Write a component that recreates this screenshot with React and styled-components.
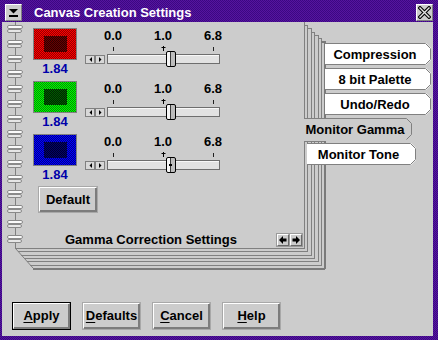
import React from "react";
import styled, { createGlobalStyle } from "styled-components";

const GlobalStyle = createGlobalStyle`
  html, body {
    margin: 0;
    padding: 0;
    background: #fff;
  }
  body {
    font-family: "Liberation Sans", Arial, sans-serif;
  }
`;

const checker = (a, b) =>
  `repeating-conic-gradient(${a} 0 25%, ${b} 0 50%) 0 0 / 2px 2px`;

const Window = styled.div`
  width: 438px;
  height: 340px;
  box-sizing: border-box;
  background: ${checker("#56149f", "#3b0882")};
  display: flex;
  flex-direction: column;
  font: bold 13px/13px "Liberation Sans", Arial, sans-serif;
  color: #000;
`;

const TitleBar = styled.div`
  height: 22px;
  box-sizing: border-box;
  padding: 4px 5px 0 5px;
  display: flex;
  align-items: flex-start;
`;

const FrameButton = styled.div`
  width: ${({ $w }) => $w}px;
  height: ${({ $w }) => $w}px;
  box-sizing: border-box;
  background: #cccccc;
  border: 1px solid;
  border-color: #fff #808080 #808080 #fff;
  display: flex;
  align-items: center;
  justify-content: center;
  margin-left: ${({ $push }) => ($push ? "auto" : "0")};
`;

const Title = styled.div`
  margin: 2px 0 0 12px;
  color: #fff;
`;

const Client = styled.div`
  flex: 1;
  margin: 0 5px 4px 2px;
  background: #cccccc;
  position: relative;
  display: flex;
  flex-direction: column;
`;

const StackArt = styled.svg`
  position: absolute;
  top: 0;
  left: 0;
  z-index: 0;
`;

const Notebook = styled.div`
  position: relative;
  z-index: 1;
  height: 270px;
  display: flex;
  align-items: flex-start;
`;

const Binding = styled.div`
  width: 21px;
  box-sizing: border-box;
  padding: 3px 0 0 5px;
  display: flex;
  flex-direction: column;
  gap: 7px;
`;

const Page = styled.div`
  width: 281px;
  box-sizing: border-box;
  padding: 6px 0 0 10px;
  display: flex;
  flex-direction: column;
`;

const ColorRow = styled.div`
  display: flex;
  margin-bottom: 6px;
`;

const SwatchCol = styled.div`
  width: 44px;
  display: flex;
  flex-direction: column;
  align-items: center;
`;

const Swatch = styled.div`
  width: 44px;
  height: 32px;
  box-sizing: border-box;
  border: 1px solid #808080;
  background: ${({ $a, $b }) => checker($a, $b)};
  display: flex;
  align-items: center;
  justify-content: center;
`;

const SwatchCore = styled.div`
  width: 23px;
  height: 16px;
  background: ${({ $a, $b }) => checker($a, $b)};
`;

const Value = styled.div`
  margin-top: 2px;
  color: #0000aa;
`;

const SliderCol = styled.div`
  margin-left: 8px;
  display: flex;
  flex-direction: column;
`;

const ScaleRow = styled.div`
  display: flex;
  padding-left: 3px;
  margin-top: ${({ $top }) => $top || 0}px;
  height: ${({ $h }) => ($h ? `${$h}px` : "auto")};
  align-items: flex-end;
`;

const ScaleCell = styled.div`
  width: 50px;
  display: flex;
  justify-content: center;
  text-align: center;
`;

const Tick = styled.div`
  width: 1px;
  height: 4px;
  background: #202020;
`;

const SliderRow = styled.div`
  height: 16px;
  display: flex;
  align-items: center;
`;

const Spin = styled.div`
  display: flex;
`;

const SpinButton = styled.div`
  width: 10px;
  height: 9px;
  box-sizing: border-box;
  background: #d8d8d8;
  border: 1px solid;
  border-color: #fff #404040 #404040 #fff;
  outline: 1px solid #808080;
  outline-offset: -1px;
  display: flex;
  align-items: center;
  justify-content: center;
`;

const Track = styled.div`
  position: relative;
  margin-left: 2px;
  width: 113px;
  height: 10px;
  box-sizing: border-box;
  border: 1px solid #6e6e6e;
  background: #e2e2e2;
  box-shadow: inset 0 1px 0 #f8f8f8;
`;

const Thumb = styled.div`
  position: absolute;
  top: -4px;
  left: 58px;
  width: 10px;
  height: 16px;
  box-sizing: border-box;
  border: 1px solid #000;
  border-radius: 2px;
  background: linear-gradient(
    to right,
    #f6f6f6 0 3px,
    #3a3a3a 3px 4px,
    #bdbdbd 4px
  );

  &::after {
    content: "";
    display: ${({ $focus }) => ($focus ? "block" : "none")};
    position: absolute;
    left: 2px;
    top: 6px;
    width: 3px;
    height: 2px;
    background: #000;
  }
`;

const PushButton = styled.button`
  width: ${({ $w }) => $w || 57}px;
  height: ${({ $h }) => $h || 26}px;
  box-sizing: border-box;
  padding: 0 0 1px;
  margin: 0 0 0 ${({ $ml }) => $ml || 0}px;
  background: #cccccc;
  border: 1px solid;
  border-color: #fff #7c7c7c #7c7c7c #fff;
  box-shadow: inset -1px -1px 0 #7c7c7c,
    0 0 0 1px ${({ $primary }) => ($primary ? "#000" : "#a8a8a8")};
  font: bold 13px/13px "Liberation Sans", Arial, sans-serif;
  color: #000;
`;

const Mnemonic = styled.span`
  text-decoration: underline;
  text-underline-offset: 2px;
`;

const Footer = styled.div`
  margin-top: 21px;
  display: flex;
  align-items: center;
  padding: 0 2px 0 32px;
`;

const PageArrows = styled.div`
  margin-left: auto;
  display: flex;
  gap: 1px;
`;

const PageArrow = styled.div`
  width: 12px;
  height: 12px;
  box-sizing: border-box;
  background: #cccccc;
  border: 1px solid;
  border-color: #fff #6a6a6a #6a6a6a #fff;
  outline: 1px solid #9a9a9a;
  display: flex;
  align-items: center;
  justify-content: center;
`;

const Tabs = styled.div`
  width: 129px;
  box-sizing: border-box;
  padding-top: 21px;
  display: flex;
  flex-direction: column;
  gap: 3px;
`;

const Tab = styled.div`
  width: ${({ $w }) => $w}px;
  height: 22px;
  margin-left: ${({ $indent }) => $indent}px;
  display: flex;
`;

const TabBody = styled.div`
  flex: 1;
  box-sizing: border-box;
  background: ${({ $sel }) => ($sel ? "#cccccc" : "#fff")};
  border-top: 1px solid #808080;
  border-bottom: 1px solid ${({ $sel }) => ($sel ? "transparent" : "#808080")};
  display: flex;
  align-items: center;
  justify-content: center;
  padding-top: 1px;
`;

const ButtonRow = styled.div`
  display: flex;
  gap: 13px;
  padding-left: 11px;
  margin-top: 11px;
`;

function TabTip({ sel }) {
  return (
    <svg width="6" height="22" style={{ display: "block" }}>
      <path d="M0 0 H1 L6 5 V17 L1 22 H0 Z" fill={sel ? "#cccccc" : "#fff"} />
      <path
        d={sel ? "M0 0.5 H0.5 L5.5 5.5 V16.5 L0.5 21.5" : "M0 0.5 H0.5 L5.5 5.5 V16.5 L0.5 21.5 H0"}
        fill="none"
        stroke="#808080"
      />
    </svg>
  );
}

function Ring() {
  return (
    <svg width="17" height="8" style={{ display: "block" }}>
      <rect x="0.5" y="0.5" width="15" height="3" rx="1.5" fill="#fafafa" stroke="#8a8a8a" />
      <rect x="0.5" y="4.5" width="14" height="3" rx="1.5" fill="#e6e6e6" stroke="#8a8a8a" />
    </svg>
  );
}

function Tri({ dir }) {
  return (
    <svg width="3" height="5" style={{ display: "block" }}>
      <path d={dir === "left" ? "M3 0 V5 L0.5 2.5 Z" : "M0 0 V5 L2.5 2.5 Z"} fill="#000" />
    </svg>
  );
}

function BigArrow({ dir }) {
  return (
    <svg width="8" height="8" style={{ display: "block" }}>
      <path
        d={dir === "left" ? "M0 4 L4 0 V2.5 H7.5 V5.5 H4 V8 Z" : "M8 4 L4 0 V2.5 H0.5 V5.5 H4 V8 Z"}
        fill="#000"
      />
    </svg>
  );
}

function Marker() {
  return (
    <svg width="5" height="5" style={{ display: "block" }}>
      <path d="M2.5 0 V5 M0.5 1.5 H4.5" stroke="#000" strokeWidth="1" />
    </svg>
  );
}

function StackLines() {
  const xr = [304, 307, 311, 314, 318, 321, 324];
  const yb = [248, 251, 255, 258, 261, 265, 268];
  const xl = [15, 18, 21, 24, 27, 30, 33];
  const yt = [22, 25, 28, 32, 35, 38, 41];
  return (
    <StackArt width="431" height="270" shapeRendering="crispEdges">
      <g transform="translate(-2,-22)" stroke="#808080" fill="none">
        <line x1="15.5" y1="22" x2="15.5" y2="248.5" />
        <line x1="15.5" y1="248.5" x2="33" y2="268" shapeRendering="auto" />
        <line x1="304" y1="141.5" x2="326" y2="141.5" />
        {xr.map((x, i) => {
          const thick = i === xr.length - 1;
          const o = thick ? 1 : 0.5;
          return (
            <g key={i} strokeWidth={thick ? 2 : 1} stroke={thick ? "#7a7a7a" : "#808080"}>
              <line x1={xl[i]} y1={yb[i] + o} x2={x + o} y2={yb[i] + o} />
              <line x1={x + o} y1="141" x2={x + o} y2={yb[i] + o} />
              <line x1={x + o} y1={yt[i]} x2={x + o} y2="118" />
              {i > 0 && <line x1={xr[i - 1]} y1={yt[i] + 0.5} x2={x + o} y2={yt[i] + 0.5} />}
            </g>
          );
        })}
      </g>
    </StackArt>
  );
}

const channels = [
  { outer: ["#ff0000", "#940000"], inner: ["#6a0000", "#2c0000"], focus: false },
  { outer: ["#00ff00", "#008a00"], inner: ["#005c00", "#002600"], focus: false },
  { outer: ["#0000ff", "#00008a"], inner: ["#00006a", "#00002a"], focus: true },
];

const tabs = [
  { label: "Compression", indent: 21, w: 106 },
  { label: "8 bit Palette", indent: 21, w: 106 },
  { label: "Undo/Redo", indent: 21, w: 106 },
  { label: "Monitor Gamma", indent: 0, w: 108, sel: true },
  { label: "Monitor Tone", indent: 3, w: 109 },
];

function ChannelRow({ outer, inner, focus }) {
  return (
    <ColorRow>
      <SwatchCol>
        <Swatch $a={outer[0]} $b={outer[1]}>
          <SwatchCore $a={inner[0]} $b={inner[1]} />
        </Swatch>
        <Value>1.84</Value>
      </SwatchCol>
      <SliderCol>
        <ScaleRow $top={1}>
          <ScaleCell>0.0</ScaleCell>
          <ScaleCell>1.0</ScaleCell>
          <ScaleCell>6.8</ScaleCell>
        </ScaleRow>
        <ScaleRow $h={9}>
          <ScaleCell>
            <Tick />
          </ScaleCell>
          <ScaleCell>
            <Marker />
          </ScaleCell>
          <ScaleCell>
            <Tick />
          </ScaleCell>
        </ScaleRow>
        <SliderRow>
          <Spin>
            <SpinButton>
              <Tri dir="left" />
            </SpinButton>
            <SpinButton>
              <Tri dir="right" />
            </SpinButton>
          </Spin>
          <Track>
            <Thumb $focus={focus} />
          </Track>
        </SliderRow>
      </SliderCol>
    </ColorRow>
  );
}

export default function App() {
  return (
    <>
      <GlobalStyle />
      <Window>
        <TitleBar>
          <FrameButton $w={17}>
            <svg width="9" height="8" style={{ display: "block" }}>
              <path d="M0 0 H9 L4.5 4.5 Z" fill="#000" />
              <rect x="0" y="6" width="9" height="2" fill="#000" />
            </svg>
          </FrameButton>
          <Title>Canvas Creation Settings</Title>
          <FrameButton $w={17} $push>
            <svg width="13" height="13" style={{ display: "block" }}>
              <path d="M2 2 L11 11 M11 2 L2 11" stroke="#000" strokeWidth="3.6" strokeLinecap="square" />
              <path d="M2 2 L11 11 M11 2 L2 11" stroke="#e4e4e4" strokeWidth="1.4" strokeLinecap="square" />
            </svg>
          </FrameButton>
        </TitleBar>
        <Client>
          <StackLines />
          <Notebook>
            <Binding>
              {Array.from({ length: 15 }, (_, i) => (
                <Ring key={i} />
              ))}
            </Binding>
            <Page>
              {channels.map((c, i) => (
                <ChannelRow key={i} {...c} />
              ))}
              <PushButton $w={58} $h={25} $ml={6}>
                Default
              </PushButton>
              <Footer>
                <span>Gamma Correction Settings</span>
                <PageArrows>
                  <PageArrow>
                    <BigArrow dir="left" />
                  </PageArrow>
                  <PageArrow>
                    <BigArrow dir="right" />
                  </PageArrow>
                </PageArrows>
              </Footer>
            </Page>
            <Tabs>
              {tabs.map(t => (
                <Tab key={t.label} $indent={t.indent} $w={t.w}>
                  <TabBody $sel={t.sel}>{t.label}</TabBody>
                  <TabTip sel={t.sel} />
                </Tab>
              ))}
            </Tabs>
          </Notebook>
          <ButtonRow>
            <PushButton $primary>
              <Mnemonic>A</Mnemonic>pply
            </PushButton>
            <PushButton>
              <Mnemonic>D</Mnemonic>efaults
            </PushButton>
            <PushButton>
              <Mnemonic>C</Mnemonic>ancel
            </PushButton>
            <PushButton>
              <Mnemonic>H</Mnemonic>elp
            </PushButton>
          </ButtonRow>
        </Client>
      </Window>
    </>
  );
}
